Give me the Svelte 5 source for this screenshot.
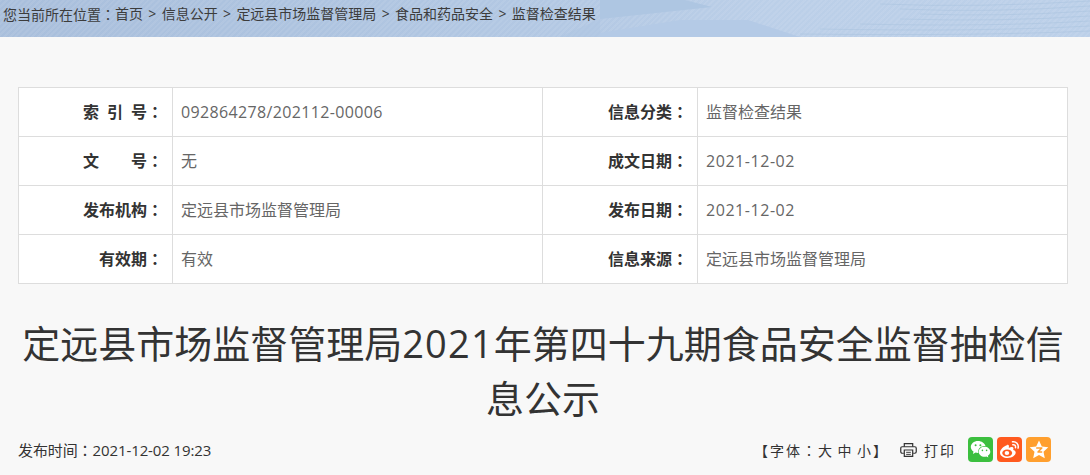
<script>
  const rows = [
    [{ label: '索\u2002引\u2002号', value: '092864278/202112-00006', num: true }, { label: '信息分类', value: '监督检查结果' }],
    [{ label: '文\u3000\u3000号', value: '无' }, { label: '成文日期', value: '2021-12-02', num: true, date: true }],
    [{ label: '发布机构', value: '定远县市场监督管理局' }, { label: '发布日期', value: '2021-12-02', num: true, date: true }],
    [{ label: '有效期', value: '有效' }, { label: '信息来源', value: '定远县市场监督管理局' }]
  ];
  const crumbs = ['首页', '信息公开', '定远县市场监督管理局', '食品和药品安全', '监督检查结果'];
</script>

<div class="page">
  <div class="crumbs">
    <svg class="facets" width="1090" height="37" viewBox="0 0 1090 37" aria-hidden="true">
      <path d="M600 0H685L712 7 600 19z" fill="#aec6e2" />
      <path d="M600 37V33L680 20H748L800 37z" fill="#b4cae6" />
      <path d="M560 37L600 19V37z" fill="#aec5e1" opacity=".5" />
      <g stroke="#aac2df" stroke-width="1" opacity=".55" fill="none">
        <path d="M880 4Q980 8 1090 1M900 9Q990 13 1090 6M920 14Q1000 17 1090 11M900 19Q1000 22 1090 16M860 24Q990 27 1090 21M820 29Q980 32 1090 26M800 34Q980 36 1090 31" />
      </g>
    </svg>
    <span class="crumb-text">您当前所在位置<span class="fw">：</span></span>
    {#each crumbs as c, i}
      {#if i > 0}<span class="sep crumb-text">&gt;</span>{/if}<span class="crumb-text">{c}</span>
    {/each}
  </div>

  <main>
    <table>
      <colgroup><col class="c1" /><col class="c2" /><col class="c3" /><col /></colgroup>
      <tbody>
        {#each rows as row}
          <tr>
            {#each row as cell}
              <th>{cell.label}<span class="fw">：</span></th>
              <td class:num={cell.num} class:date={cell.date}>{cell.value}</td>
            {/each}
          </tr>
        {/each}
      </tbody>
    </table>

    <h1>定远县市场监督管理局<span class="year">2021</span>年第四十九期食品安全监督抽检信息公示</h1>

    <div class="foot">
      <span class="time">发布时间<span class="fw">：</span>2021-12-02 19:23</span>
      <div class="tools">
        <span class="size">【字体<span class="fw">：</span><span class="opt">大</span><span class="opt">中</span><span>小</span>】</span>
        <span class="print">
          <svg width="17" height="14" viewBox="0 0 18 15" fill="none" stroke="#333" stroke-width="1.3">
            <path d="M4.500 4V.7h9V4" />
            <path d="M4 11H2.200A1.500 1.500 0 0 1 .7 9.500V5.500A1.500 1.500 0 0 1 2.200 4h13.600a1.500 1.500 0 0 1 1.500 1.500v4a1.500 1.500 0 0 1-1.500 1.500H14" />
            <path d="M4.500 7.500h9v6.800h-9z" />
            <path d="M6.500 10h5M6.500 12.200h5" stroke-width="1" />
          </svg>
          打印
        </span>
        <div class="share">
          <span class="ico wx">
            <svg width="21" height="19" viewBox="0 0 21 19" fill="#fff">
              <path d="M8 1C3.900 1 .8 3.700.8 7c0 1.900 1.100 3.500 2.700 4.600L2.900 14l2.700-1.400c.8.2 1.500.3 2.400.3h.4a5 5 0 0 1-.2-1.500C8.200 8.200 11.200 6 14.800 6h.7C14.700 3.200 11.600 1 8 1z" />
              <path d="M20.300 11.700c0-2.900-2.600-5-5.800-5s-5.800 2.100-5.800 5 2.600 5 5.800 5c.7 0 1.300-.1 1.900-.3l2 1.200-.6-1.900c1.500-.9 2.500-2.300 2.500-4z" />
              <circle cx="5.600" cy="5.200" r="1" fill="#3cbf3f" /><circle cx="10.400" cy="5.200" r="1" fill="#3cbf3f" />
              <circle cx="12.400" cy="10.400" r=".8" fill="#3cbf3f" /><circle cx="16.600" cy="10.400" r=".8" fill="#3cbf3f" />
            </svg>
          </span>
          <span class="ico wb">
            <svg width="21" height="19" viewBox="0 0 21 19" fill="none">
              <path d="M8.500 5C4.800 6.200 1 9.500 1 12.700 1 15.800 4.800 18 8.500 18c4.800 0 8.200-2.800 8.200-5.400 0-1.600-1.400-2.300-2.500-2.600.4-1.200.4-2.200-.4-2.700-1-.6-2.700-.1-4 .7.400-1.500.2-3.900-1.800-3z" fill="#fff" />
              <ellipse cx="8.200" cy="13" rx="5" ry="3.500" fill="#ff5a1f" />
              <ellipse cx="7.900" cy="13" rx="2.300" ry="1.900" fill="#fff" />
              <path d="M13.500 1.800c3.500-.6 6.500 2.300 5.600 6.300M13.800 4.700c1.800-.3 3.100 1 2.700 3" stroke="#fff" stroke-width="1.500" stroke-linecap="round" />
            </svg>
          </span>
          <span class="ico qz">
            <svg width="20" height="19" viewBox="0 0 20 19">
              <path d="M10 .5l2.800 6 6.500.8-4.800 4.500 1.300 6.500L10 15l-5.800 3.300 1.300-6.500L.7 7.300l6.500-.8z" fill="#fff" />
              <path d="M7.200 8h5.600l-3.800 4h4.200" fill="none" stroke="#ff9f2e" stroke-width="1.500" stroke-linejoin="round" />
            </svg>
          </span>
        </div>
      </div>
    </div>
  </main>
</div>

<style>
  :global(body) {
    margin: 0;
    background: #f8f8f8;
  }
  .page {
    font-family: "Open Sans", "Noto Sans CJK SC", sans-serif;
    color: #333;
    height: 475px;
    overflow: hidden;
  }
  .fw {
    font-family: "Noto Sans CJK TC", sans-serif;
  }
  .crumbs {
    position: relative;
    height: 37px;
    box-sizing: border-box;
    padding: 5px 0 0 3px;
    font-size: 14px;
    line-height: 18px;
    color: #3c3c3c;
    display: flex;
    background:
      repeating-linear-gradient(135deg, rgba(255,255,255,.07) 0 2px, rgba(255,255,255,0) 2px 4px),
      linear-gradient(95deg, #a9bfdc 0%, #aec4e0 30%, #b4c9e4 55%, #bbcfe8 70%, #bcd0e9 100%);
  }
  .facets {
    position: absolute;
    left: 0;
    top: 0;
  }
  .crumb-text {
    position: relative;
  }
  .sep {
    margin: 0 5.350px;
    width: 8px;
    text-align: center;
  }
  main {
    padding: 50px 22px 0 18px;
  }
  table {
    width: 1050px;
    border-collapse: collapse;
    table-layout: fixed;
    background: #fff;
  }
  .c1 { width: 154px; }
  .c2 { width: 370px; }
  .c3 { width: 155px; }
  th, td {
    border: 1px solid #ddd;
    height: 46px;
    padding: 0 0 2px;
    font-size: 16px;
    box-sizing: content-box;
  }
  th {
    text-align: right;
    padding-right: 9px;
    font-weight: 700;
    color: #333;
  }
  td {
    padding-left: 8px;
    color: #666;
  }
  td.num {
    height: 48px;
    padding-bottom: 0;
    letter-spacing: .35px;
  }
  td.date {
    letter-spacing: .55px;
  }
  h1 {
    margin: 32px 0 0;
    font-size: 38px;
    line-height: 55px;
    font-weight: 400;
    text-align: center;
    color: #333;
  }
  .year {
    letter-spacing: 1.200px;
  }
  .foot {
    display: flex;
    justify-content: space-between;
    align-items: center;
    width: 1033px;
    margin-top: 11px;
    font-size: 15px;
  }
  .time {
    letter-spacing: -.1px;
  }
  .tools {
    display: flex;
    align-items: center;
  }
  .size {
    font-size: 14px;
    letter-spacing: 2px;
    white-space: nowrap;
  }
  .opt {
    margin-right: 3.500px;
  }
  .print {
    display: flex;
    align-items: center;
    gap: 7px;
    margin-left: 11px;
    margin-right: 12px;
    letter-spacing: 2px;
    font-size: 14px;
  }
  .share {
    display: flex;
    gap: 4px;
  }
  .ico {
    width: 25px;
    height: 25px;
    border-radius: 4px;
    display: flex;
    align-items: center;
    justify-content: center;
  }
  .wx { background: #3cbf3f; }
  .wb { background: #ff5a1f; }
  .qz { background: #ff9f2e; }
</style>
